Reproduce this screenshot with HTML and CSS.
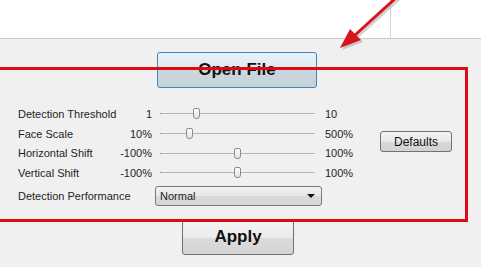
FILE: index.html
```html
<!DOCTYPE html>
<html lang="en">
<head>
    <meta charset="UTF-8">
    <title>Face Detection Settings</title>
    <link rel="stylesheet" href="styles.css">
</head>
<body>
    <div class="top-area">
        <div class="top-pane"></div>
    </div>

    <div class="panel">
        <button class="open-btn" type="button">Open File</button>

        <div class="settings">
            <span class="label">Detection Threshold</span>
            <span class="value">1</span>
            <div class="slider"><span class="thumb" style="left: 23%;"></span></div>
            <span class="max">10</span>

            <span class="label">Face Scale</span>
            <span class="value">10%</span>
            <div class="slider"><span class="thumb" style="left: 18.5%;"></span></div>
            <span class="max">500%</span>

            <span class="label">Horizontal Shift</span>
            <span class="value">-100%</span>
            <div class="slider"><span class="thumb" style="left: 49.5%;"></span></div>
            <span class="max">100%</span>

            <span class="label">Vertical Shift</span>
            <span class="value">-100%</span>
            <div class="slider"><span class="thumb" style="left: 49.5%;"></span></div>
            <span class="max">100%</span>

            <button class="defaults-btn" type="button">Defaults</button>
        </div>

        <div class="perf-row">
            <span class="label perf-label">Detection Performance</span>
            <div class="select">
                <span>Normal</span>
                <span class="caret"></span>
            </div>
        </div>

        <button class="apply-btn" type="button">Apply</button>
    </div>

    <!-- annotation overlays -->
    <div class="red-box"></div>
    <svg class="arrow" width="481" height="60" viewBox="0 0 481 60">
        <g fill="#9a9a9a" opacity="0.45" transform="translate(2 2)">
            <line x1="398" y1="-4" x2="354" y2="36" stroke="#9a9a9a" stroke-width="3"/>
            <polygon points="340,48 350,29 361,40"/>
        </g>
        <line x1="398" y1="-4" x2="354" y2="36" stroke="#d8141c" stroke-width="3"/>
        <polygon points="340,48 350,29 361,40" fill="#d8141c"/>
    </svg>
</body>
</html>
```

FILE: styles.css
```css
body {
    margin: 0;
    background: #f0f0f0;
    font-family: "Liberation Sans", Arial, sans-serif;
    font-size: 11px;
    color: #1e1e1e;
    position: relative;
    height: 267px;
    overflow: hidden;
}
.top-area {
    height: 38px;
    background: #fff;
    border-bottom: 1px solid #c9c9c9;
}
.top-pane {
    width: 390px;
    height: 38px;
    border-right: 1px solid #d4d4d4;
}
.panel {
    padding-top: 13px;
}
button {
    font-family: "Liberation Sans", Arial, sans-serif;
    color: #111;
    cursor: pointer;
}
.open-btn {
    display: block;
    margin-left: 157px;
    width: 160px;
    height: 36px;
    border: 1px solid #3c87bd;
    border-radius: 3px;
    background: linear-gradient(#e9f3f9, #dbe7ef 50%, #cbd6dd 51%, #c7d3da);
    font-size: 17px;
    font-weight: bold;
}
.settings {
    display: grid;
    grid-template-columns: 100px 34px 163px 65px 72px;
    grid-auto-rows: 19.7px;
    padding-left: 18px;
    margin-top: 16px;
    align-items: center;
}
.label {
    white-space: nowrap;
}
.value {
    text-align: right;
}
.slider {
    position: relative;
    height: 11px;
    margin-left: 8px;
}
.slider::before {
    content: "";
    position: absolute;
    left: 0;
    right: 0;
    top: 5px;
    height: 1px;
    background: #b5b5b5;
    border-left: 1px solid #8a8a8a;
}
.thumb {
    position: absolute;
    top: 0;
    width: 5px;
    height: 9px;
    margin-left: -3px;
    border: 1px solid #8c8c8c;
    border-radius: 2px 2px 3px 3px;
    background: linear-gradient(#fdfdfd, #e3e3e3);
}
.max {
    padding-left: 10px;
}
.defaults-btn {
    grid-column: 5;
    grid-row: 1 / 5;
    align-self: start;
    margin-top: 27px;
    height: 21px;
    border: 1px solid #727272;
    border-radius: 3px;
    background: linear-gradient(#f4f4f4, #e8e8e8 50%, #d9d9d9 51%, #d2d2d2);
    font-size: 12px;
}
.perf-row {
    display: flex;
    align-items: center;
    margin-top: 3px;
    padding-left: 18px;
}
.perf-label {
    width: 137px;
}
.select {
    display: flex;
    align-items: center;
    justify-content: space-between;
    box-sizing: border-box;
    width: 167px;
    height: 20px;
    padding: 0 6px 0 4px;
    border: 1px solid #7a7a7a;
    border-radius: 3px;
    background: linear-gradient(#f3f3f3, #e6e6e6 50%, #d9d9d9 51%, #d6d6d6);
}
.caret {
    width: 0;
    height: 0;
    border-left: 4px solid transparent;
    border-right: 4px solid transparent;
    border-top: 4px solid #111;
}
.apply-btn {
    display: block;
    margin-left: 182px;
    margin-top: 14px;
    width: 112px;
    height: 35px;
    border: 1px solid #707070;
    border-radius: 3px;
    background: linear-gradient(#f4f4f4, #ebebeb 50%, #dcdcdc 51%, #d4d4d4);
    font-size: 17px;
    font-weight: bold;
}
.red-box {
    position: absolute;
    left: -10px;
    top: 67px;
    width: 478px;
    height: 155px;
    box-sizing: border-box;
    border: 3px solid #dc0c16;
    pointer-events: none;
}
.arrow {
    position: absolute;
    left: 0;
    top: 0;
    pointer-events: none;
}
```
